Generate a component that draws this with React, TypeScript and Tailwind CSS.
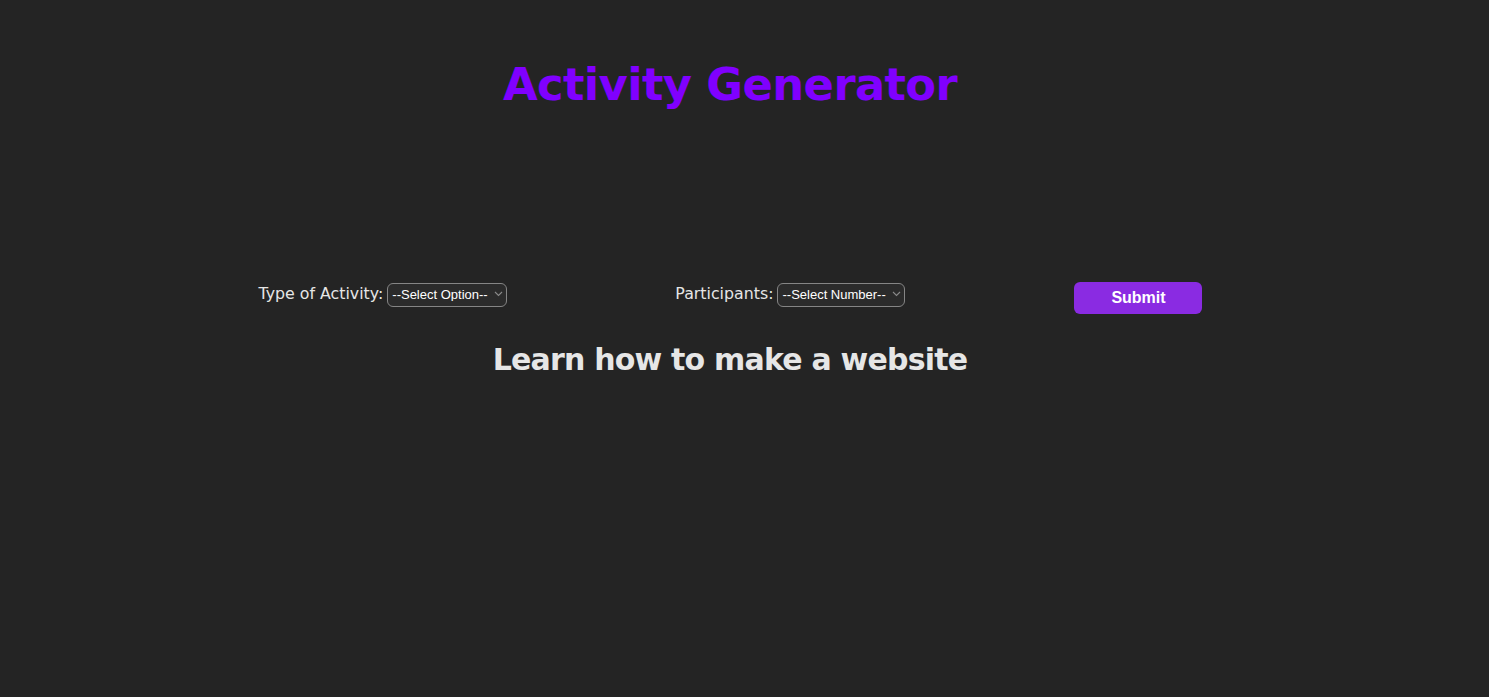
import React from "react";

function Chevron() {
  return (
    <svg width="9" height="6" viewBox="0 0 9 6" className="absolute right-[4px] top-[9px] pointer-events-none">
      <path d="M1 1l3.5 3.5L8 1" fill="none" stroke="#8a8a8a" strokeWidth="1.1" />
    </svg>
  );
}

function Select({ label, width }: { label: string; width: string }) {
  return (
    <div className={`relative ${width} h-[24px]`}>
      <select
        className="appearance-none w-full h-full rounded-[6px] border border-[#858585] bg-[#2b2b2b] text-white text-[13px] pl-[4px] pr-[14px] leading-none outline-none"
        style={{ fontFamily: '"Liberation Sans", Arial, sans-serif' }}
        defaultValue=""
      >
        <option value="">{label}</option>
      </select>
      <Chevron />
    </div>
  );
}

export default function App() {
  return (
    <div className="min-h-[697px] w-full bg-[#242424]" style={{ fontFamily: '"DejaVu Sans", sans-serif' }}>
      <div className="w-[1460px] flex flex-col items-center">
        <h1 className="mt-[55px] text-[44.8px] leading-[60px] font-bold text-[#8000ff] tracking-[-0.6px]">
          Activity Generator
        </h1>
        <div className="mt-[167px] w-[943px] flex justify-between items-start">
          <div className="flex items-center gap-[4px]">
            <span className="text-[15.8px] text-[#e6e6e6]">Type of Activity:</span>
            <Select label="--Select Option--" width="w-[120px]" />
          </div>
          <div className="flex items-center gap-[4px]">
            <span className="text-[15.8px] text-[#e6e6e6]">Participants:</span>
            <Select label="--Select Number--" width="w-[128px]" />
          </div>
          <button
            className="w-[128px] h-[32px] rounded-[6px] bg-[#8a2be2] text-white text-[16px] font-bold pl-[2px]"
            style={{ fontFamily: '"Liberation Sans", Arial, sans-serif' }}
          >
            Submit
          </button>
        </div>
        <h2 className="mt-[26px] text-[30px] leading-[40px] font-bold text-[#e6e6e6] tracking-[-0.8px]">
          Learn how to make a website
        </h2>
      </div>
    </div>
  );
}
